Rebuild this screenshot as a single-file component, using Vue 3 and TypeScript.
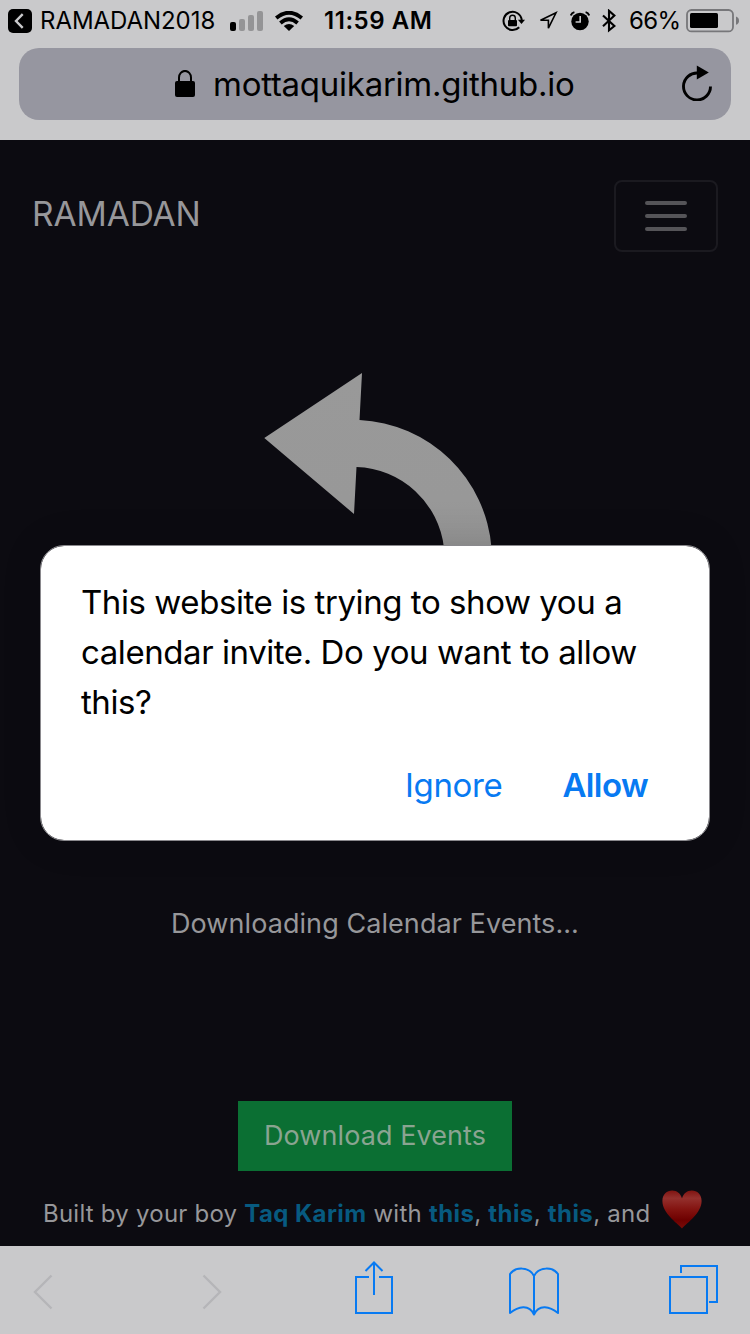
<script setup lang="ts">
const creditLinks: string[] = ['this', 'this', 'this']
const messageLines: string[] = [
  'This website is trying to show you a',
  'calendar invite. Do you want to allow',
  'this?',
]
</script>

<template>
  <div class="phone">
    <header class="chrome">
      <div class="status">
        <svg class="back-app" width="24" height="24" viewBox="0 0 24 24">
          <rect width="24" height="24" rx="5" fill="#000" />
          <path d="M14.7 5.2 L8 12 L14.7 18.8" fill="none" stroke="#c9c9cb" stroke-width="2.4" />
        </svg>
        <span class="back-label">RAMADAN2018</span>
        <svg class="signal" width="34" height="20" viewBox="0 0 34 20">
          <rect x="0" y="11" width="6" height="9" rx="2" fill="#000" />
          <rect x="9" y="8" width="6" height="12" rx="2" fill="#949496" />
          <rect x="18" y="4" width="6" height="16" rx="2" fill="#949496" />
          <rect x="27" y="0" width="6" height="20" rx="2" fill="#949496" />
        </svg>
        <svg class="wifi" width="28" height="20" viewBox="0 0 28 20">
          <g fill="none" stroke="#000" stroke-width="3.8">
            <path d="M1.2 7 Q14 -3.6 26.8 7" />
            <path d="M5.4 12 Q14 4.4 22.6 12" />
          </g>
          <path d="M8.8 15 Q14 11 19.2 15 L14 20 Z" fill="#000" />
        </svg>
        <span class="time">11:59 AM</span>
        <svg class="rotation" width="24" height="24" viewBox="0 0 24 24">
          <path d="M18.2 18.2 A9.1 9.1 0 1 1 20.7 11" fill="none" stroke="#000" stroke-width="2" />
          <path d="M16.9 10.8 H24 L20.5 15 Z" fill="#000" />
          <rect x="7" y="11" width="9" height="6.3" rx="1" fill="#000" />
          <path d="M8.7 11 V9 A2.8 2.8 0 0 1 14.3 9 V11" fill="none" stroke="#000" stroke-width="1.4" />
        </svg>
        <svg class="location" width="20" height="20" viewBox="0 0 20 20">
          <path d="M18 1.8 L2.5 9.2 H10.4 V17.2 Z" fill="none" stroke="#000" stroke-width="1.6" />
        </svg>
        <svg class="alarm" width="20" height="20" viewBox="0 0 20 20">
          <circle cx="10" cy="10.5" r="8.7" fill="#000" />
          <path d="M10.2 5 V11 H5.6" fill="none" stroke="#c9c9cb" stroke-width="1.6" />
          <path d="M.8 4.6 Q1.6 1.8 4.4 1.1 M15.6 1.1 Q18.4 1.8 19.2 4.6" fill="none" stroke="#000" stroke-width="2" />
        </svg>
        <svg class="bluetooth" width="14" height="24" viewBox="0 0 14 24">
          <path d="M1 6.4 L12.4 17 L7 21.4 V1.8 L12.4 6.6 L1 17.2" fill="none" stroke="#000" stroke-width="2.1" />
        </svg>
        <span class="percent">66%</span>
        <svg class="battery" width="54" height="24" viewBox="0 0 54 24">
          <rect x="1" y="1" width="46" height="21.4" rx="4.5" fill="none" stroke="#77777a" stroke-width="1.8" />
          <rect x="4" y="4" width="28" height="15" rx="1.6" fill="#000" />
          <path d="M50 7.6 Q53 8.6 53 11.7 Q53 14.8 50 15.8 Z" fill="#77777a" />
        </svg>
      </div>
      <div class="address">
        <svg class="lock" width="20" height="28" viewBox="0 0 20 28">
          <rect x="0" y="11" width="20" height="16" rx="2" fill="#000" />
          <path d="M4 12 V7.5 A6 6.6 0 0 1 16 7.5 V12" fill="none" stroke="#000" stroke-width="2" />
        </svg>
        <span class="url">mottaquikarim.github.io</span>
        <svg class="reload" width="32" height="36" viewBox="0 0 32 36">
          <path d="M17 8 A13.5 13.5 0 1 0 29.5 21.5" fill="none" stroke="#000" stroke-width="2.9" />
          <path d="M15.8 .5 L27.8 7.5 L15.8 14.5 Z" fill="#000" />
        </svg>
      </div>
    </header>

    <main class="page">
      <nav class="navbar">
        <span class="brand">RAMADAN</span>
        <button class="toggler" type="button" aria-label="Menu">
          <i></i><i></i><i></i>
        </button>
      </nav>
      <svg class="arrow" width="230" height="200" viewBox="264 373 230 200">
        <defs>
          <linearGradient id="arrow-fill" gradientUnits="userSpaceOnUse" x1="0" y1="373" x2="0" y2="550">
            <stop offset="0" stop-color="#999" />
            <stop offset=".72" stop-color="#989898" />
            <stop offset="1" stop-color="#929292" />
          </linearGradient>
        </defs>
        <path d="M264.3 438 L362 373 L359.5 420 A139 139 0 0 1 491.5 548 V573 H444 V548 A91 91 0 0 0 356.5 467 L354 514 Z" fill="url(#arrow-fill)" />
      </svg>
      <p class="progress">Downloading Calendar Events...</p>
      <button class="download" type="button">Download Events</button>
      <footer class="credit">
        <span class="credit-text">Built by your boy <b>Taq Karim</b> with <template v-for="(link, i) in creditLinks" :key="i"><b>{{ link }}</b>, </template>and</span>
        <svg class="heart" width="40" height="39" viewBox="0 0 40 39">
          <defs>
            <linearGradient id="heart-fill" x1="0" y1="0" x2="0" y2="1">
              <stop offset="0" stop-color="#7f1411" />
              <stop offset=".2" stop-color="#94302d" />
              <stop offset=".5" stop-color="#831310" />
              <stop offset=".78" stop-color="#6d0000" />
              <stop offset="1" stop-color="#7a0c08" />
            </linearGradient>
          </defs>
          <path d="M20 38.5 C14.5 32.5 .4 23 .4 11 C.4 4.6 4.8 .6 10.2 .6 C15 .6 18.8 3.8 20 8.4 C21.2 3.8 25 .6 29.8 .6 C35.2 .6 39.6 4.6 39.6 11 C39.6 23 25.5 32.5 20 38.5 Z" fill="url(#heart-fill)" />
        </svg>
      </footer>
    </main>

    <nav class="toolbar">
      <svg class="prev" width="20" height="36" viewBox="0 0 20 36">
        <path d="M18.5 1.5 L2 18 L18.5 34.5" fill="none" stroke="#b5b5b8" stroke-width="2.4" />
      </svg>
      <svg class="next" width="20" height="36" viewBox="0 0 20 36">
        <path d="M1.5 1.5 L18 18 L1.5 34.5" fill="none" stroke="#b5b5b8" stroke-width="2.4" />
      </svg>
      <svg class="share" width="38" height="54" viewBox="0 0 38 54">
        <path d="M14 16 H1 V52 H37 V16 H24 M19 34 V2 M10.5 10 L19 1.5 L27.5 10" fill="none" stroke="#087af2" stroke-width="2" />
      </svg>
      <svg class="book" width="50" height="50" viewBox="0 0 50 50">
        <path d="M25 47.5 V9 C20 -1 6 0 1 7 V46 C9 39.5 20 36.5 25 47.5 C30 36.5 41 39.5 49 46 V7 C44 0 30 -1 25 9" fill="none" stroke="#087af2" stroke-width="2" stroke-linejoin="round" />
      </svg>
      <svg class="tabs" width="50" height="50" viewBox="0 0 50 50">
        <path d="M1 13 H38 V49 H1 Z M12 9 V2 H48 V38 H40" fill="none" stroke="#087af2" stroke-width="2" />
      </svg>
    </nav>

    <div class="dialog" role="alertdialog">
      <p class="message"><span v-for="line in messageLines" :key="line">{{ line }}</span></p>
      <div class="actions">
        <button class="ignore" type="button">Ignore</button>
        <button class="allow" type="button">Allow</button>
      </div>
    </div>
  </div>
</template>

<style>
body {
  margin: 0;
}
</style>

<style scoped>
.phone {
  position: relative;
  display: flex;
  flex-direction: column;
  width: 750px;
  height: 1334px;
  overflow: hidden;
  background: #0c0b11;
  font-family: Inter, "Liberation Sans", sans-serif;
  color: #000;
}
svg {
  display: block;
  flex: none;
}
span {
  white-space: nowrap;
}
button {
  padding: 0;
  border: 0;
  background: none;
  font-family: inherit;
}
p {
  margin: 0;
}
.chrome {
  box-sizing: border-box;
  height: 140px;
  background: #c9c9cb;
}
.status {
  display: flex;
  align-items: center;
  height: 42px;
  padding-left: 8px;
  margin-bottom: 6px;
  font-size: 24px;
  line-height: 42px;
}
.back-label {
  width: 174px;
  margin: 0 16px 0 8px;
  letter-spacing: -.05px;
}
.wifi {
  margin: 0 21px 0 11px;
}
.time {
  width: 109px;
  margin-right: 69px;
  font-weight: 600;
  letter-spacing: .55px;
}
.rotation {
  margin-left: -1px;
  margin-right: 1px;
}
.location {
  margin: 0 12px;
}
.bluetooth {
  margin: 0 13px 0 12px;
}
.percent {
  width: 50px;
  margin-right: 7px;
  letter-spacing: -.6px;
}
.address {
  display: flex;
  align-items: center;
  height: 72px;
  margin: 0 19px;
  border-radius: 20px;
  background: #9696a0;
}
.lock {
  margin: 0 18px 0 156px;
}
.url {
  flex: 1;
  font-size: 33px;
  letter-spacing: -.26px;
}
.reload {
  margin-right: 18px;
  margin-bottom: 3px;
}
.page {
  display: flex;
  flex-direction: column;
  align-items: center;
  height: 1106px;
  color: #97979a;
}
.navbar {
  box-sizing: border-box;
  display: flex;
  align-items: flex-start;
  justify-content: space-between;
  width: 100%;
  height: 233px;
  padding: 40px 32px 0 32px;
}
.brand {
  font-size: 33.5px;
  line-height: 68px;
  letter-spacing: -.1px;
}
.toggler {
  box-sizing: border-box;
  display: flex;
  flex-direction: column;
  align-items: center;
  justify-content: center;
  gap: 9px;
  width: 104px;
  height: 72px;
  border: 2px solid #1b1a20;
  border-radius: 8px;
}
.toggler i {
  width: 42px;
  height: 4px;
  border-radius: 2px;
  background: #555458;
}
.arrow {
  margin-left: 8px;
}
.progress {
  margin-top: 327px;
  font-size: 27px;
  line-height: 48px;
  letter-spacing: .07px;
  white-space: nowrap;
}
.download {
  flex: none;
  width: 274px;
  height: 70px;
  margin-top: 153px;
  background: #0b6f33;
  color: #8aa491;
  font-size: 27px;
  line-height: 68px;
  letter-spacing: .07px;
  white-space: nowrap;
}
.credit {
  box-sizing: border-box;
  display: flex;
  align-items: flex-start;
  width: 100%;
  margin-top: 19px;
  padding-left: 43px;
}
.credit-text {
  width: 619px;
  font-size: 24px;
  line-height: 48px;
  letter-spacing: .23px;
}
.credit b {
  color: #075a80;
  font-weight: 700;
  letter-spacing: .4px;
}
.toolbar {
  display: flex;
  align-items: flex-start;
  height: 88px;
  background: #c9c9cb;
}
.prev {
  margin: 28px 0 0 33px;
}
.next {
  margin: 28px 0 0 149px;
}
.share {
  margin: 15px 0 0 133px;
}
.book {
  margin: 21px 0 0 116px;
}
.tabs {
  margin: 18px 0 0 110px;
}
.dialog {
  position: absolute;
  left: 40px;
  top: 545px;
  box-sizing: border-box;
  width: 670px;
  height: 296px;
  padding: 31px 61px 0 40px;
  border: 1px solid #8a898d;
  border-radius: 24px;
  background: #fff;
  background-clip: padding-box;
  box-shadow: 0 0 40px rgba(0, 0, 0, .12);
}
.message {
  display: flex;
  flex-direction: column;
  font-size: 33px;
  line-height: 50px;
  letter-spacing: -.43px;
}
.actions {
  display: flex;
  justify-content: flex-end;
  gap: 60px;
  margin-top: 34px;
}
.actions button {
  color: #087af2;
  font-size: 33px;
  line-height: 48px;
  letter-spacing: -.35px;
}
.actions .allow {
  font-weight: 600;
  letter-spacing: -.6px;
}
</style>
